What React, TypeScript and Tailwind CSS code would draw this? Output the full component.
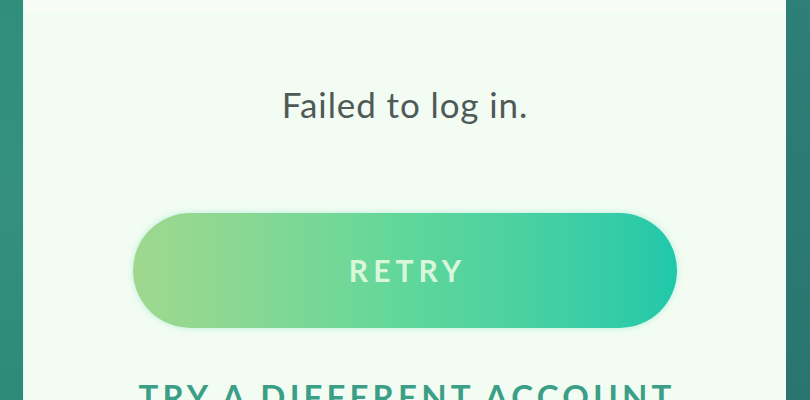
import React from "react";

export default function App() {
  return (
    <div className="w-[810px] h-[400px] overflow-hidden flex" style={{ fontFamily: "Lato, 'Open Sans', sans-serif" }}>
      <div className="w-[23px] h-full shrink-0 bg-gradient-to-b from-[#2f8f7c] via-[#35907f] to-[#2d8a78]" />
      <div className="flex-1 h-full bg-[#f3fcf2] flex flex-col items-center border-l border-[#e8f8f4] overflow-hidden">
        <div className="h-[12px] w-full shrink-0 bg-[#f7fdf6]" />
        <p className="shrink-0 mt-[70px] text-[35px] leading-[44px] text-[#4f5a58] tracking-[0.9px]">Failed to log in.</p>
        <button className="shrink-0 mt-[87px] w-[544px] h-[115px] rounded-full bg-gradient-to-r from-[#9fd88e] via-[#5fd79a] to-[#1fc8aa] shadow-[0_0_6px_rgba(120,230,200,0.5)] flex items-center justify-center">
          <span className="text-[30px] font-bold tracking-[5px] text-[#daf7dc] pl-[5px]">RETRY</span>
        </button>
        <p className="shrink-0 mt-[48px] text-[33px] font-bold tracking-[4.2px] text-[#3b9f87] leading-[40px] whitespace-nowrap pl-[4px]">TRY A DIFFERENT ACCOUNT</p>
      </div>
      <div className="w-[24px] h-full shrink-0 bg-gradient-to-b from-[#2e7f77] via-[#2b7a73] to-[#2a756f]" />
    </div>
  );
}
